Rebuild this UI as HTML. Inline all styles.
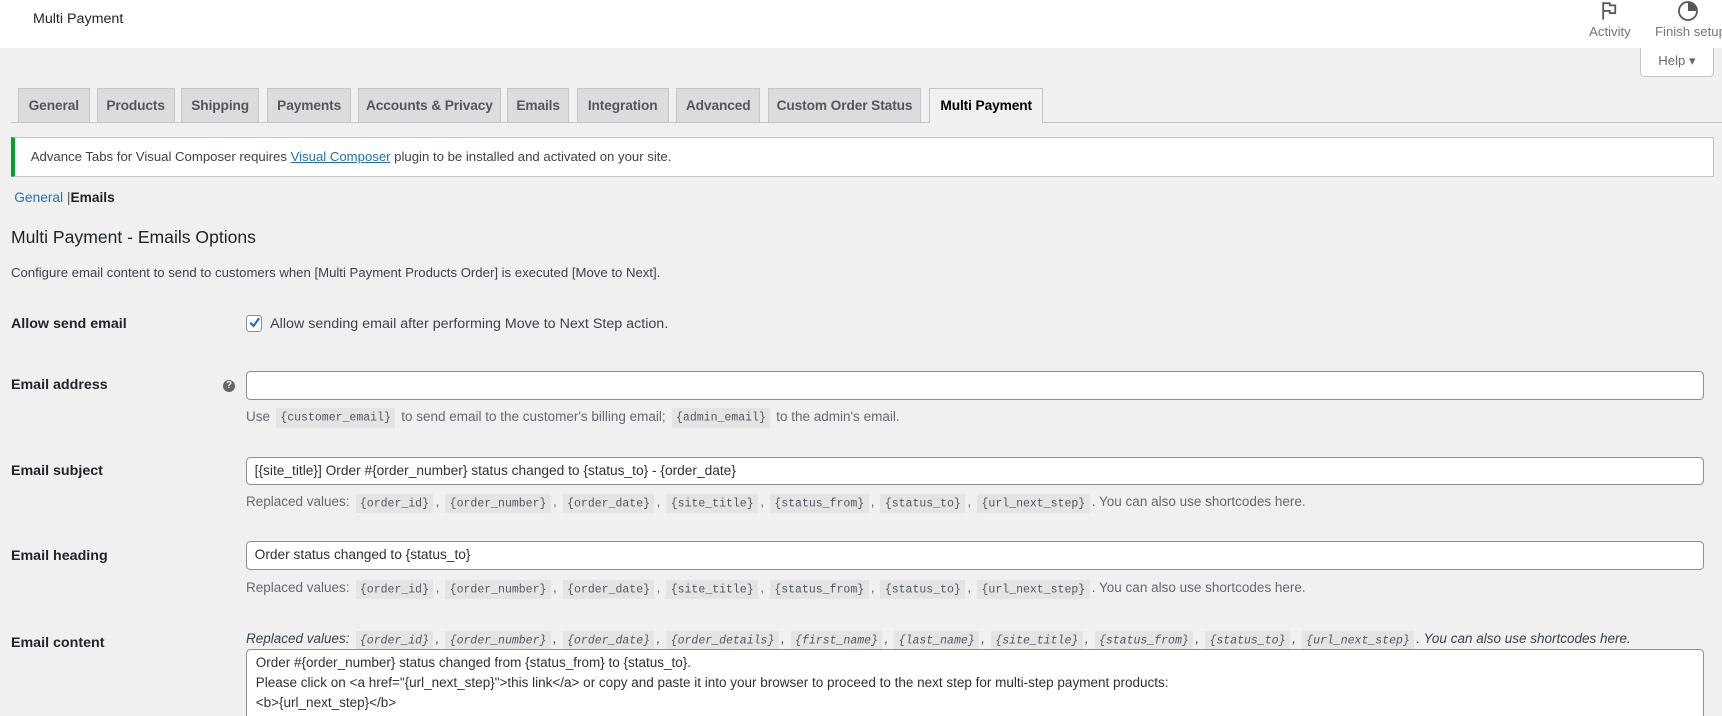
<!DOCTYPE html>
<html><head><meta charset="utf-8"><style>
html,body{margin:0;padding:0}
body{width:1722px;height:716px;overflow:hidden;background:#f0f0f1}
#w{zoom:1.0982;width:1568px;height:652px;position:relative;font-family:"Liberation Sans",sans-serif;font-size:13px;color:#1d2327;overflow:hidden}
.a{position:absolute;white-space:nowrap}
.hdr{position:absolute;left:0;top:0;width:1568px;height:44px;background:#fff}
.tab{position:absolute;top:80px;height:31px;background:#dcdcde;border:1px solid #c3c4c7;border-bottom:none;color:#50575e;font-size:12.5px;font-weight:bold;line-height:31px;text-align:center;box-sizing:border-box;letter-spacing:-0.1px}
.lbl{position:absolute;left:10px;font-size:13px;font-weight:bold;color:#1d2327}
.inp{position:absolute;left:224px;width:1328px;height:26px;background:#fff;border:1px solid #8c8f94;border-radius:4px;box-sizing:border-box;padding-left:8px;line-height:24px;font-size:12.5px;color:#2c3338}
.d{position:absolute;left:224px;color:#646970;font-size:12.3px;white-space:nowrap}
code{font-family:"Liberation Mono",monospace;font-size:10.5px;background:#e4e4e5;padding:3px 4px;margin:0 2px;color:#50575e}
</style></head><body><div id="w">
<div class="hdr"></div>
<div class="a" style="left:30px;top:10px;font-size:13px">Multi Payment</div>
<svg class="a" style="left:1458px;top:1px" width="16" height="18" viewBox="0 0 16 18"><path d="M2 1v16M2 2h6v2h5v7H8V9H2" fill="none" stroke="#555" stroke-width="1.6"/></svg>
<div class="a" style="left:1447px;top:22px;font-size:12px;color:#757575">Activity</div>
<svg class="a" style="left:1527px;top:0px" width="20" height="20" viewBox="0 0 20 20"><circle cx="10" cy="10" r="8.2" fill="none" stroke="#555" stroke-width="1.6"/><path d="M10 10V2.5A7.5 7.5 0 0 1 17.5 10Z" fill="#555"/></svg>
<div class="a" style="left:1507px;top:22px;font-size:12px;color:#757575">Finish setup</div>
<div class="a" style="left:1493px;top:44px;width:68px;height:26px;background:#fff;border:1px solid #c3c4c7;border-top:none;border-radius:0 0 4px 4px;box-sizing:border-box;text-align:center;line-height:24px;font-size:12px;color:#646970">Help ▾</div>
<div class="a" style="left:10px;top:111px;width:1558px;height:1px;background:#c3c4c7"></div>
<div class="tab" style="left:16px;width:66px">General</div>
<div class="tab" style="left:88px;width:71px">Products</div>
<div class="tab" style="left:165px;width:71px">Shipping</div>
<div class="tab" style="left:243px;width:77px">Payments</div>
<div class="tab" style="left:326px;width:130px">Accounts &amp; Privacy</div>
<div class="tab" style="left:462px;width:56px">Emails</div>
<div class="tab" style="left:525px;width:84px">Integration</div>
<div class="tab" style="left:616px;width:76px">Advanced</div>
<div class="tab" style="left:699px;width:140px">Custom Order Status</div>
<div class="tab" style="left:846px;width:104px;height:32px;background:#f0f0f1;color:#000">Multi Payment</div>
<div class="a" style="left:10px;top:125px;width:1551px;height:36px;background:#fff;border:1px solid #c3c4c7;border-left:4px solid #00a32a;box-sizing:border-box"></div>
<div class="a" style="left:28px;top:136px;font-size:12px;color:#3c434a">Advance Tabs for Visual Composer requires <span style="color:#2271b1;text-decoration:underline">Visual Composer</span> plugin to be installed and activated on your site.</div>
<div class="a" style="left:13px;top:173px;font-size:12.5px"><span style="color:#2271b1">General</span> <span style="color:#50575e">|</span><b>Emails</b></div>
<div class="a" style="left:10px;top:207px;font-size:16px">Multi Payment - Emails Options</div>
<div class="a" style="left:10px;top:241px;font-size:12px;color:#3c434a">Configure email content to send to customers when [Multi Payment Products Order] is executed [Move to Next].</div>
<div class="lbl" style="top:288px">Allow send email</div>
<div class="a" style="left:224px;top:287px;width:15px;height:15px;border:1px solid #8c8f94;border-radius:3px;background:#fff;box-sizing:border-box"></div>
<svg class="a" style="left:225px;top:287px" width="14" height="14" viewBox="0 0 14 14"><path d="M3 7l3 3 5-7" fill="none" stroke="#2271b1" stroke-width="2"/></svg>
<div class="a" style="left:246px;top:288px;font-size:13px;color:#3c434a">Allow sending email after performing Move to Next Step action.</div>
<div class="lbl" style="top:343px">Email address</div>
<div class="a" style="left:203px;top:346px;width:11px;height:11px;border-radius:50%;background:#666;color:#fff;font-size:9px;font-weight:bold;text-align:center;line-height:11px">?</div>
<div class="inp" style="top:338px"></div>
<div class="d" style="top:372px">Use <code>{customer_email}</code> to send email to the customer's billing email; <code>{admin_email}</code> to the admin's email.</div>
<div class="lbl" style="top:422px">Email subject</div>
<div class="inp" style="top:416px;padding-left:7px">[{site_title}] Order #{order_number} status changed to {status_to} - {order_date}</div>
<div class="d" style="top:450px">Replaced values: <code>{order_id}</code>, <code>{order_number}</code>, <code>{order_date}</code>, <code>{site_title}</code>, <code>{status_from}</code>, <code>{status_to}</code>, <code>{url_next_step}</code>. You can also use shortcodes here.</div>
<div class="lbl" style="top:499px">Email heading</div>
<div class="inp" style="top:493px;padding-left:7px">Order status changed to {status_to}</div>
<div class="d" style="top:528px">Replaced values: <code>{order_id}</code>, <code>{order_number}</code>, <code>{order_date}</code>, <code>{site_title}</code>, <code>{status_from}</code>, <code>{status_to}</code>, <code>{url_next_step}</code>. You can also use shortcodes here.</div>
<div class="lbl" style="top:578px">Email content</div>
<div class="d" style="top:575px;font-style:italic;color:#3c434a">Replaced values: <code style="font-style:italic">{order_id}</code>, <code style="font-style:italic">{order_number}</code>, <code style="font-style:italic">{order_date}</code>, <code style="font-style:italic">{order_details}</code>, <code style="font-style:italic">{first_name}</code>, <code style="font-style:italic">{last_name}</code>, <code style="font-style:italic">{site_title}</code>, <code style="font-style:italic">{status_from}</code>, <code style="font-style:italic">{status_to}</code>, <code style="font-style:italic">{url_next_step}</code>. You can also use shortcodes here.</div>
<div class="inp" style="top:591px;height:61px;border-bottom:none;border-radius:4px 4px 0 0;line-height:18px;padding-top:3px;white-space:pre;font-size:12.3px;overflow:hidden">Order #{order_number} status changed from {status_from} to {status_to}.
Please click on &lt;a href="{url_next_step}"&gt;this link&lt;/a&gt; or copy and paste it into your browser to proceed to the next step for multi-step payment products:
&lt;b&gt;{url_next_step}&lt;/b&gt;
&lt;br&gt;</div>
</div></body></html>
